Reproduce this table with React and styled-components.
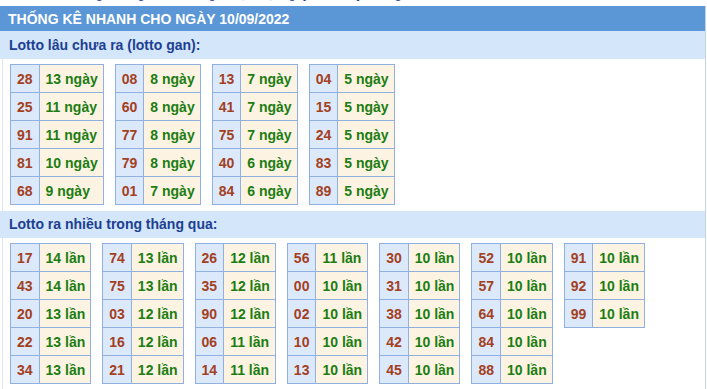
import React from 'react';
import styled, { createGlobalStyle } from 'styled-components';

const Global = createGlobalStyle`
  body {
    margin: 0;
    background: #fff;
    font-family: "Liberation Sans", Arial, sans-serif;
  }
`;

const Clip = styled.div`
  height: 6px;
  overflow: hidden;
  padding-left: 40px;
`;

const ClipText = styled.div`
  font-size: 13px;
  line-height: 14px;
  margin-top: -13px;
  color: #1d3f91;
  white-space: nowrap;
`;

const Panel = styled.div`
  width: 705px;
  border-right: 1px solid #c6d2df;
`;

const Title = styled.div`
  height: 25px;
  line-height: 26px;
  background: #5b96d6;
  color: #fff;
  font-weight: bold;
  font-size: 14px;
  padding-left: 8px;
`;

const SubTitle = styled.div`
  height: ${(p) => p.$h}px;
  line-height: ${(p) => p.$h}px;
  background: #d3e6fa;
  color: #1d3f91;
  font-weight: bold;
  font-size: 14px;
  padding-left: 9px;
`;

const Body = styled.div`
  display: flex;
  flex-wrap: wrap;
  align-items: flex-start;
  gap: 11px;
  padding: 5px 0 6px 7px;
  margin-left: 2px;
  border-left: 1px solid #dfe6ee;
`;

const Table = styled.table`
  border-collapse: collapse;
  font-size: 14px;
  font-weight: bold;
`;

const Num = styled.td`
  border: 1px solid #8fb1e2;
  background: #dce9fb;
  color: #a3401e;
  height: 27px;
  padding: 0 6px;
  text-align: center;
`;

const Val = styled.td`
  border: 1px solid #8fb1e2;
  background: #fdf3e2;
  color: #1b7d12;
  height: 27px;
  padding: 0 5px 0 6px;
  white-space: nowrap;
`;

const gan = [
  [['28', '13'], ['25', '11'], ['91', '11'], ['81', '10'], ['68', '9']],
  [['08', '8'], ['60', '8'], ['77', '8'], ['79', '8'], ['01', '7']],
  [['13', '7'], ['41', '7'], ['75', '7'], ['40', '6'], ['84', '6']],
  [['04', '5'], ['15', '5'], ['24', '5'], ['83', '5'], ['89', '5']],
];

const nhieu = [
  [['17', '14'], ['43', '14'], ['20', '13'], ['22', '13'], ['34', '13']],
  [['74', '13'], ['75', '13'], ['03', '12'], ['16', '12'], ['21', '12']],
  [['26', '12'], ['35', '12'], ['90', '12'], ['06', '11'], ['14', '11']],
  [['56', '11'], ['00', '10'], ['02', '10'], ['10', '10'], ['13', '10']],
  [['30', '10'], ['31', '10'], ['38', '10'], ['42', '10'], ['45', '10']],
  [['52', '10'], ['57', '10'], ['64', '10'], ['84', '10'], ['88', '10']],
  [['91', '10'], ['92', '10'], ['99', '10']],
];

function Group({ rows, unit }) {
  return (
    <Table>
      <tbody>
        {rows.map(([n, v]) => (
          <tr key={n}>
            <Num>{n}</Num>
            <Val>
              {v} {unit}
            </Val>
          </tr>
        ))}
      </tbody>
    </Table>
  );
}

export default function App() {
  return (
    <>
      <Global />
      <Clip>
        <ClipText>
          Xem thống kê lô gan, cầu lô, giải đặc biệt ngày hôm nay, thống kê xổ số nhanh nhất
        </ClipText>
      </Clip>
      <Panel>
        <Title>THỐNG KÊ NHANH CHO NGÀY 10/09/2022</Title>
        <SubTitle $h={28}>Lotto lâu chưa ra (lotto gan):</SubTitle>
        <Body>
          {gan.map((g, i) => (
            <Group key={i} rows={g} unit="ngày" />
          ))}
        </Body>
        <SubTitle $h={27}>Lotto ra nhiều trong tháng qua:</SubTitle>
        <Body>
          {nhieu.map((g, i) => (
            <Group key={i} rows={g} unit="lần" />
          ))}
        </Body>
      </Panel>
    </>
  );
}
